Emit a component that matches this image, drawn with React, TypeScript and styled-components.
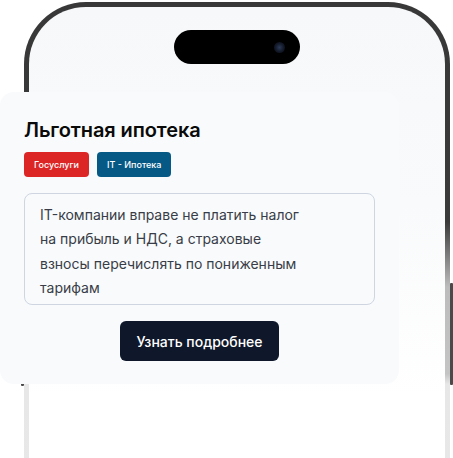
import React from 'react';
import styled, { createGlobalStyle } from 'styled-components';

const GlobalStyle = createGlobalStyle`
  html, body {
    margin: 0;
    padding: 0;
    background: #ffffff;
  }
  body {
    font-family: 'Inter', 'Noto Sans', sans-serif;
    -webkit-font-smoothing: antialiased;
  }
`;

const Stage = styled.div`
  position: relative;
  width: 453px;
  height: 458px;
  overflow: hidden;
  background: #ffffff;
`;

// корпус телефона: рамка сделана через padding на градиентном фоне
const PhoneFrame = styled.div`
  position: relative;
  margin: 2px 0 0 24px;
  width: 426px;
  height: 900px;
  padding: 5px;
  box-sizing: border-box;
  border-radius: 62px;
  background: linear-gradient(
    to bottom,
    #383838 0px,
    #3a3a3a 220px,
    #bcbcbc 285px,
    #c4c4c4 372px,
    #e7e7e7 382px,
    #ececec 100%
  );
`;

const PhoneScreen = styled.div`
  height: 100%;
  border-radius: 57px;
  background: linear-gradient(to bottom, #f6f8fa 0px, #f9fafb 200px, #ffffff 390px);
  display: flex;
  justify-content: center;
  padding-top: 23px;
  box-sizing: border-box;
`;

const Island = styled.div`
  width: 126px;
  height: 34px;
  border-radius: 17px;
  background: #000000;
  display: flex;
  align-items: center;
  justify-content: flex-end;
  padding-right: 15px;
  box-sizing: border-box;
`;

const Lens = styled.div`
  width: 11px;
  height: 11px;
  border-radius: 50%;
  background: radial-gradient(circle at 50% 50%, #2c3957 0, #141b2c 50%, #040609 100%);
`;

const SideButton = styled.div<{ $top: number; $height: number; $side: 'left' | 'right' }>`
  position: absolute;
  top: ${({ $top }) => $top}px;
  ${({ $side }) => ($side === 'left' ? 'left: -3px;' : 'right: -3px;')}
  width: 3px;
  height: ${({ $height }) => $height}px;
  background: #4a4a4a;
  border-radius: 1px;
`;

const Card = styled.div`
  position: absolute;
  top: 92px;
  left: 0;
  width: 399px;
  height: 292px;
  box-sizing: border-box;
  background: #f8fafc;
  border-radius: 14px;
  padding: 25px 24px 0 24px;
  display: flex;
  flex-direction: column;
`;

const Title = styled.h2`
  margin: 0;
  font-size: 20px;
  line-height: 26px;
  font-weight: 600;
  color: #0a0a0a;
  letter-spacing: -0.1px;
`;

const Tags = styled.div`
  display: flex;
  gap: 8px;
  margin-top: 9px;
`;

const Tag = styled.span<{ $color: string }>`
  display: inline-flex;
  align-items: center;
  height: 25px;
  padding: 0 10px;
  border-radius: 4px;
  background: ${({ $color }) => $color};
  color: #ffffff;
  font-size: 9px;
  font-weight: 500;
`;

const Description = styled.div`
  margin-top: 16px;
  width: 351px;
  height: 112px;
  box-sizing: border-box;
  border: 1px solid #cfd6e2;
  border-radius: 8px;
  padding: 9px 15px;
`;

const DescriptionText = styled.p`
  margin: 0;
  max-width: 266px;
  font-size: 14px;
  line-height: 24.3px;
  color: #383d47;
`;

const ButtonRow = styled.div`
  display: flex;
  justify-content: center;
  margin-top: 16px;
`;

const MoreButton = styled.button`
  width: 159px;
  height: 40px;
  border: none;
  border-radius: 6px;
  background: #0f172a;
  color: #ffffff;
  font-family: 'Inter', 'Noto Sans', sans-serif;
  font-size: 14px;
  font-weight: 500;
  cursor: pointer;
`;

const App: React.FC = () => {
  return (
    <>
      <GlobalStyle />
      <Stage>
        <PhoneFrame>
          <SideButton $side="right" $top={281} $height={102} />
          <SideButton $side="left" $top={370} $height={14} />
          <PhoneScreen>
            <Island>
              <Lens />
            </Island>
          </PhoneScreen>
        </PhoneFrame>

        <Card>
          <Title>Льготная ипотека</Title>
          <Tags>
            <Tag $color="#dc2626">Госуслуги</Tag>
            <Tag $color="#075985">IT - Ипотека</Tag>
          </Tags>
          <Description>
            <DescriptionText>
              IT-компании вправе не платить налог на прибыль и НДС, а страховые взносы
              перечислять по пониженным тарифам
            </DescriptionText>
          </Description>
          <ButtonRow>
            <MoreButton>Узнать подробнее</MoreButton>
          </ButtonRow>
        </Card>
      </Stage>
    </>
  );
};

export default App;
